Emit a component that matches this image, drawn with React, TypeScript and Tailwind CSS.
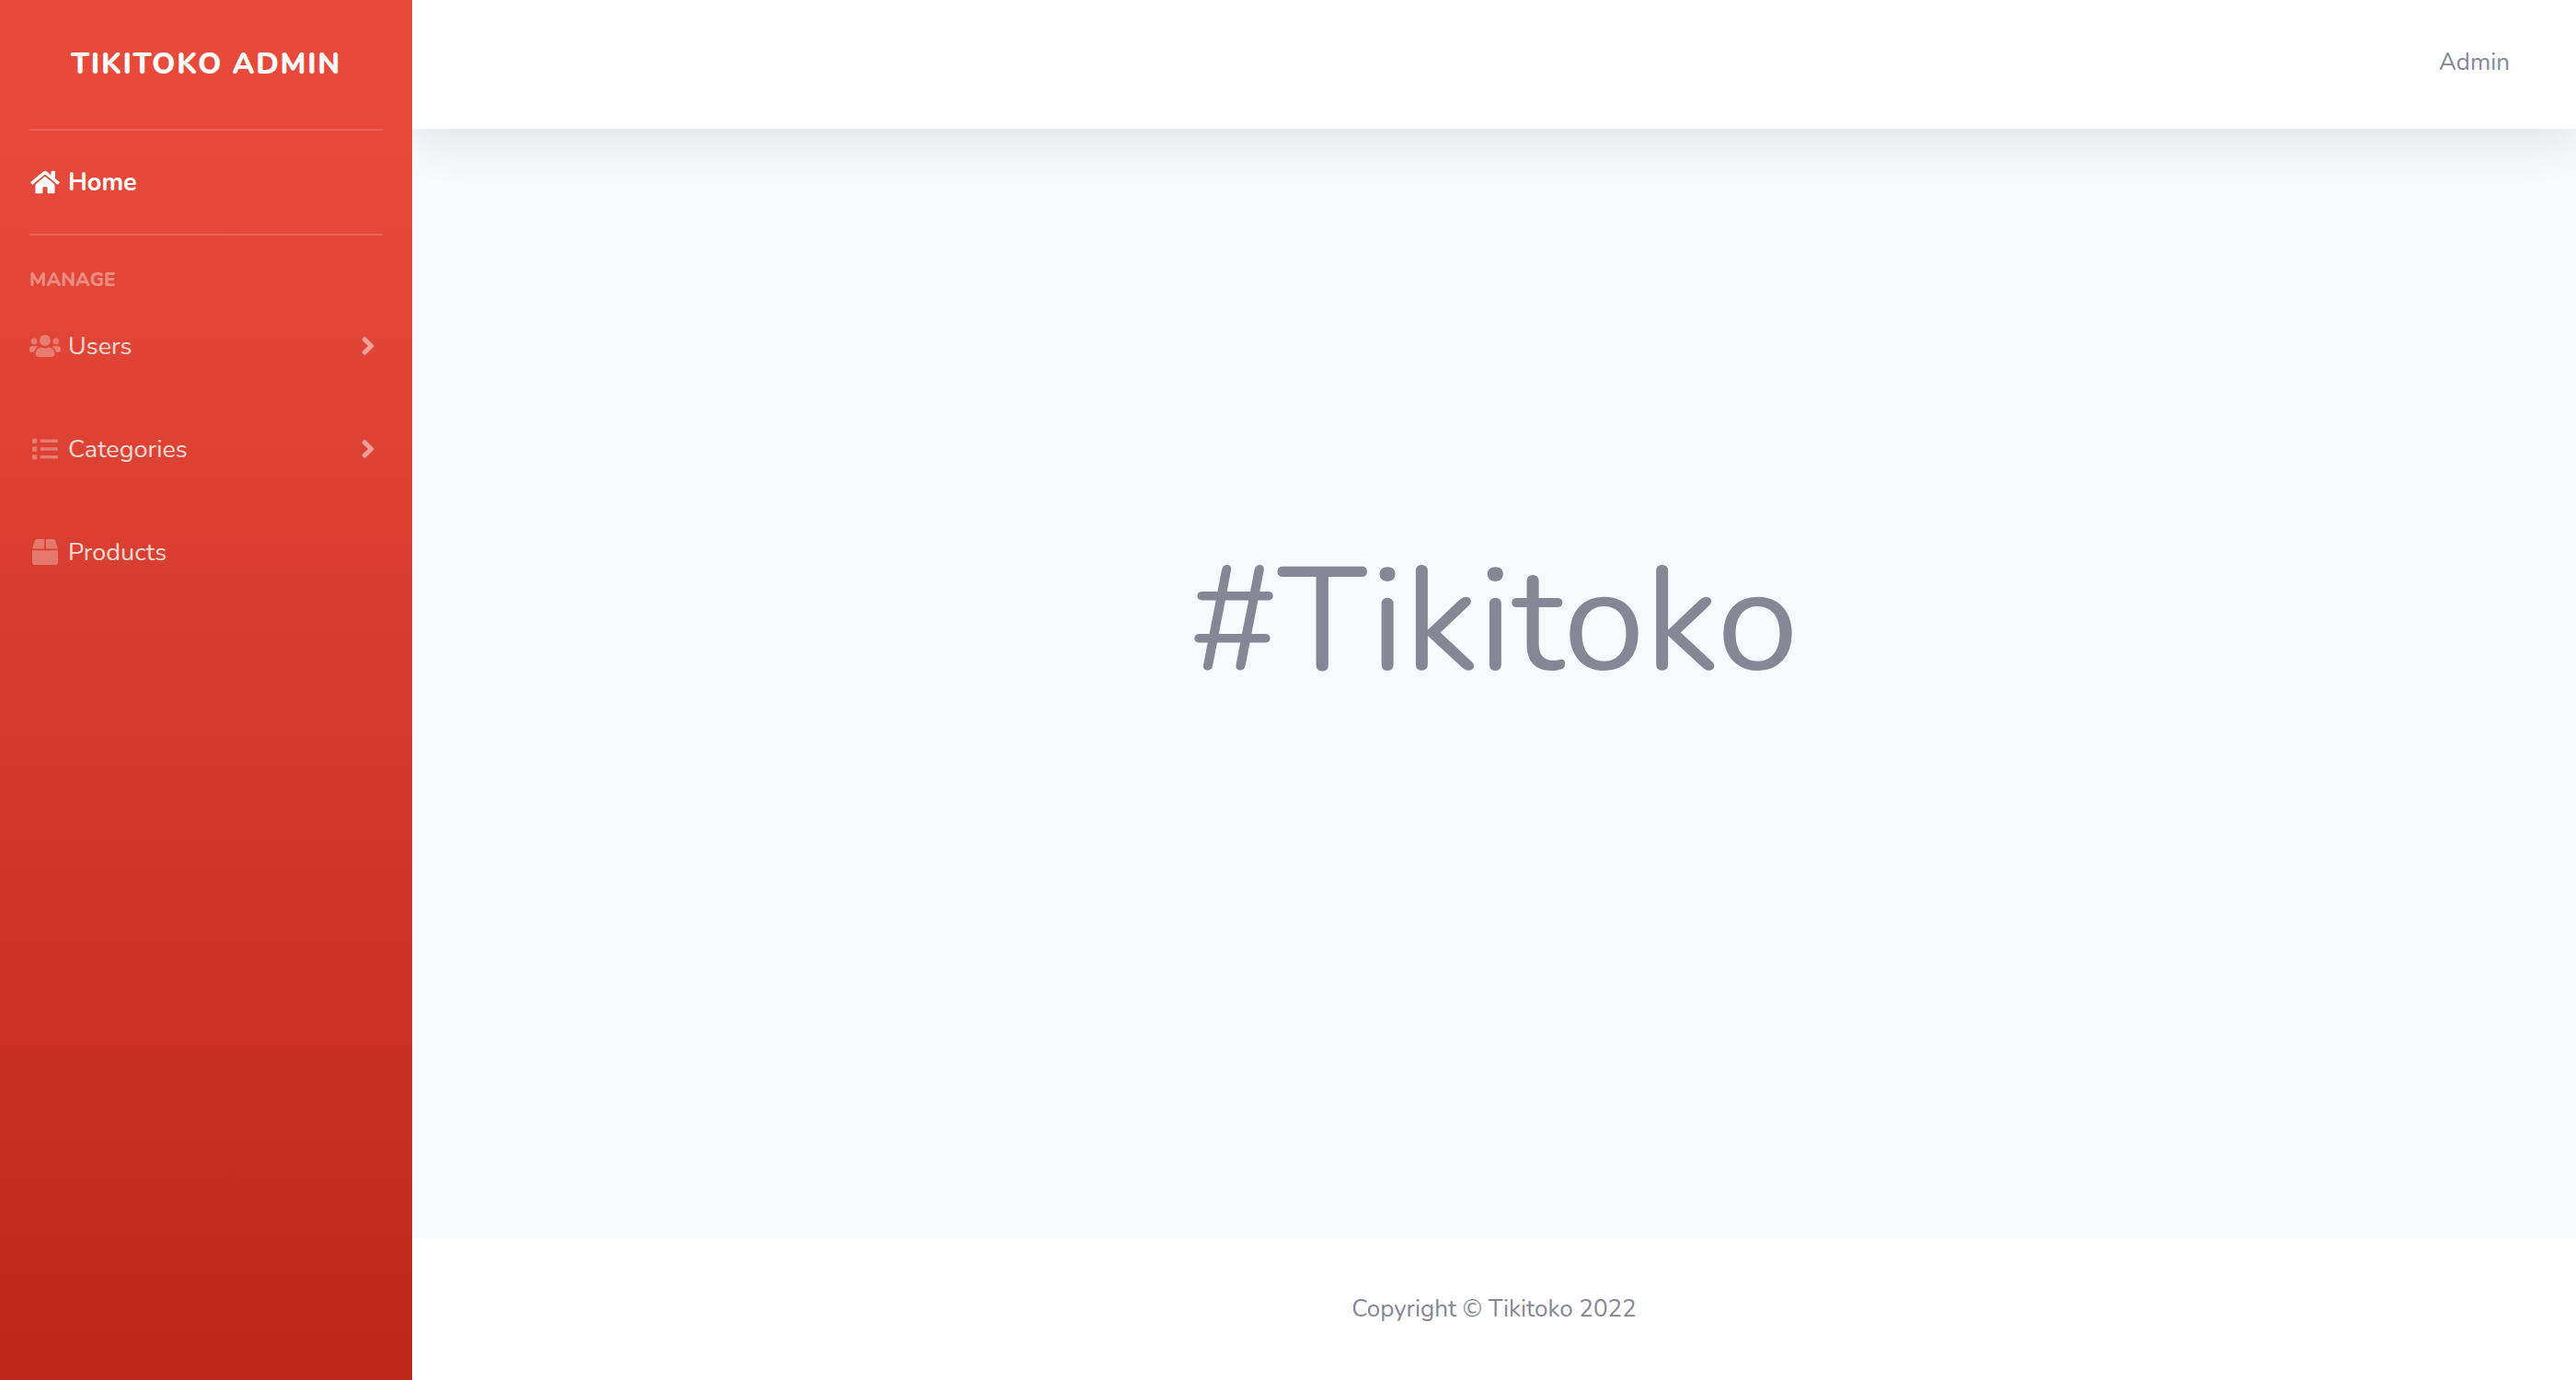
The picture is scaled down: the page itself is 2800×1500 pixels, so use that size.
import type { ComponentType } from "react";
import { FaAngleRight, FaBox, FaHome, FaList, FaUsers } from "react-icons/fa";

type Item = {
  label: string;
  icon: ComponentType<{ className?: string }>;
  expandable: boolean;
};

const manageItems: Item[] = [
  { label: "Users", icon: FaUsers, expandable: true },
  { label: "Categories", icon: FaList, expandable: true },
  { label: "Products", icon: FaBox, expandable: false },
];

function ManageItem({ label, icon: Icon, expandable }: Item) {
  const content = (
    <>
      <Icon className="h-7 w-[34px] text-white/30" />
      <span className="pt-0.5">{label}</span>
    </>
  );
  const row =
    "flex h-28 w-full items-center gap-2 px-8 text-left text-white/80";

  return (
    <li>
      {expandable ? (
        <button type="button" aria-expanded="false" className={row}>
          {content}
          <FaAngleRight className="ml-auto text-[32px] text-white/50" />
        </button>
      ) : (
        <a href="#products" className={row}>
          {content}
        </a>
      )}
    </li>
  );
}

function Sidebar() {
  return (
    <aside className="w-[448px] shrink-0 bg-linear-to-b from-[#e74a3b] from-10% to-[#be2617] text-[27px] leading-10">
      <a
        href="#top"
        className="flex h-[140px] items-center justify-center px-8 text-[32px] font-extrabold tracking-wider text-white uppercase"
      >
        Tikitoko Admin
      </a>
      <hr className="mx-8 border-t-2 border-white/15" />
      <nav aria-label="Main">
        <a
          href="#home"
          aria-current="page"
          className="flex h-28 items-center gap-2 px-8 font-bold text-white"
        >
          <FaHome className="h-7 w-[34px]" />
          <span className="pt-0.5">Home</span>
        </a>
        <hr className="mx-8 mb-8 border-t-2 border-white/15" />
        <h2 className="px-8 text-[21px] leading-8 font-extrabold text-white/40 uppercase">
          Manage
        </h2>
        <ul>
          {manageItems.map((item) => (
            <ManageItem key={item.label} {...item} />
          ))}
        </ul>
      </nav>
    </aside>
  );
}

export default function App() {
  return (
    <div
      id="top"
      className="flex min-h-screen bg-white font-[Nunito,'Open_Sans',sans-serif] text-[26px] text-[#858796]"
    >
      <Sidebar />
      <div className="flex min-w-0 flex-1 flex-col overflow-hidden bg-[#f8f9fc]">
        <header className="flex h-[140px] items-center justify-end bg-white px-[72px] pb-1 shadow-[0_5px_56px_rgba(58,59,69,0.15)]">
          <button type="button" className="leading-10">
            Admin
          </button>
        </header>
        <main className="flex flex-1 items-center justify-center pb-34">
          <h1 className="text-[160px] leading-none">#Tikitoko</h1>
        </main>
        <footer className="bg-white py-16 text-center leading-[26px]">
          Copyright © Tikitoko 2022
        </footer>
      </div>
    </div>
  );
}
